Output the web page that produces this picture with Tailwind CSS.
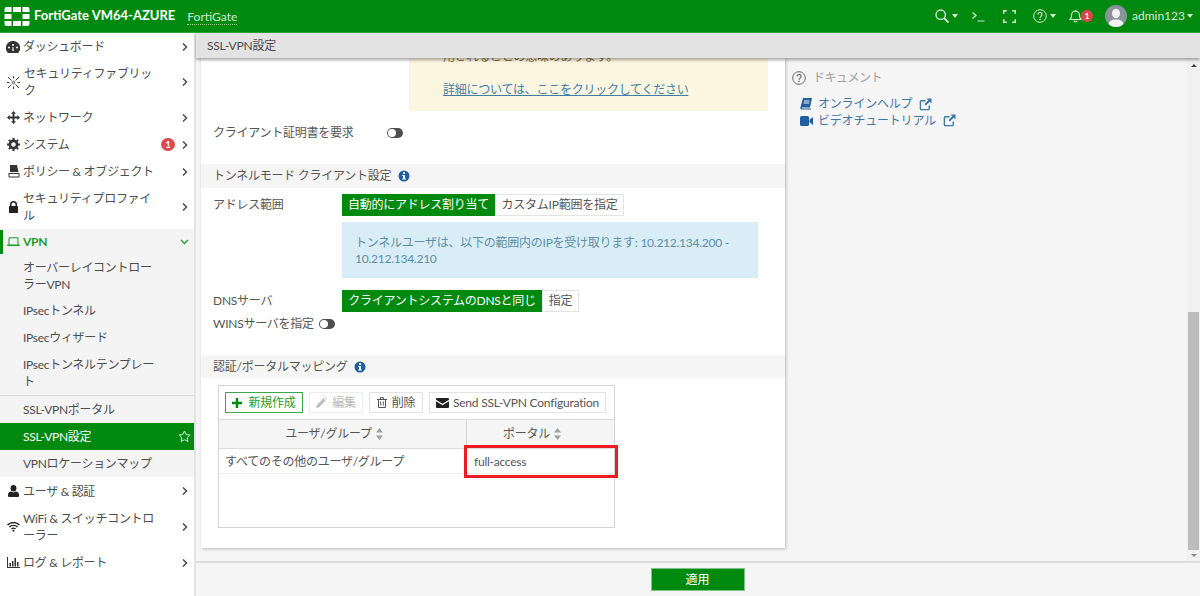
<!DOCTYPE html>
<html lang="ja">
<head>
<meta charset="utf-8">
<script src="https://cdn.jsdelivr.net/npm/@tailwindcss/browser@4"></script>
<title>SSL-VPN設定</title>
</head>
<body class="m-0">
<svg class="hidden">
  <defs>
    <symbol id="chev" viewBox="0 0 8 12"><path d="M2 2.500l3.500 3.500L2 9.500" fill="none" stroke="currentColor" stroke-width="1.500"/></symbol>
    <symbol id="ext" viewBox="0 0 14 14"><path d="M7 3H2.500A1 1 0 0 0 1.500 4v7.500a1 1 0 0 0 1 1H10a1 1 0 0 0 1-1V8" fill="none" stroke="currentColor" stroke-width="1.500"/><path d="M8 .5h5.500V6l-2-2-4 4L6 6.500l4-4z" fill="currentColor"/></symbol>
    <symbol id="info" viewBox="0 0 12 12"><circle cx="6" cy="6" r="5.500" fill="#1f5f9e"/><rect x="5" y="2.200" width="2" height="1.800" fill="#fff"/><path d="M4.300 5h2.700v3.400h.8v1H4.300v-1h.8V6h-.8z" fill="#fff"/></symbol>
    <symbol id="sort" viewBox="0 0 8 12"><path d="M4 0l3.500 4.500h-7zM4 12L.5 7.500h7z" fill="currentColor"/></symbol>
  </defs>
</svg>
<div class="w-[1200px] h-[596px] flex flex-col overflow-hidden bg-[#f5f5f5] text-[12px] text-[#555] font-['Lato','Noto_Sans_CJK_JP',sans-serif]">

  <header class="h-[33px] shrink-0 bg-[#00890f] text-white flex items-center border-b border-[#2ea33a]">
    <svg class="ml-[4px] w-[26px] h-[19px]" viewBox="0 0 25 19" fill="#fff">
      <path d="M0 2a2 2 0 0 1 2-2h5v5H0zM8.500 0h8v5h-8zM18 0h5a2 2 0 0 1 2 2v3h-7zM0 7h7v5H0zM18 7h7v5h-7zM0 14h7v5H2a2 2 0 0 1-2-2zM8.500 14h8v5h-8zM18 14h7v3a2 2 0 0 1-2 2h-5z"/>
    </svg>
    <span class="ml-[4px] text-[13px] font-bold whitespace-nowrap">FortiGate VM64-AZURE</span>
    <span class="ml-[12px] text-[12px] text-[#cfe9d2] border-b border-dotted border-[#9fd0a5] leading-[15px] mt-[1px]">FortiGate</span>
    <div class="ml-auto flex items-center text-[#d5ecd8]">
      <svg class="w-[14px] h-[14px]" viewBox="0 0 14 14" fill="none" stroke="currentColor" stroke-width="1.400"><circle cx="5.700" cy="5.700" r="4.700"/><path d="M9 9l4.500 4.500" stroke-width="1.800"/></svg>
      <svg class="ml-[3px] w-[6px] h-[4px]" viewBox="0 0 6 4" fill="currentColor"><path d="M0 0h6L3 4z"/></svg>
      <svg class="ml-[14px] w-[13px] h-[11px]" viewBox="0 0 13 11" fill="none" stroke="currentColor" stroke-width="1.200"><path d="M.5 1.500l3.500 3-3.500 3M5.500 10h7"/></svg>
      <svg class="ml-[18px] w-[13px] h-[13px]" viewBox="0 0 13 13" fill="none" stroke="currentColor" stroke-width="1.500"><path d="M.8 3.800V.8h3M9.200.8h3v3M12.200 9.200v3h-3M3.800 12.200h-3v-3"/></svg>
      <svg class="ml-[17px] w-[14px] h-[14px]" viewBox="0 0 14 14" fill="none" stroke="currentColor" stroke-width="1"><circle cx="7" cy="7" r="6.300"/><path d="M5 5.500a2 2 0 1 1 3 1.700c-.7.400-1 .8-1 1.500" stroke-width="1.200"/><rect x="6.400" y="9.700" width="1.300" height="1.300" fill="currentColor" stroke="none"/></svg>
      <svg class="ml-[3px] w-[6px] h-[4px]" viewBox="0 0 6 4" fill="currentColor"><path d="M0 0h6L3 4z"/></svg>
      <svg class="ml-[13px] w-[13px] h-[14px]" viewBox="0 0 13 14" fill="none" stroke="currentColor" stroke-width="1.100"><path d="M1 10.500c1.300-1.200 1.600-2.500 1.600-4.500a3.900 3.900 0 0 1 7.800 0c0 2 .3 3.300 1.600 4.500zM5 11.500a1.500 1.500 0 0 0 3 0M6.500 1v1"/></svg>
      <span class="-ml-[1px] w-[12px] h-[12px] rounded-full bg-[#e0434e] text-white text-[8px] font-bold leading-[12px] text-center">1</span>
      <span class="ml-[12px] w-[22px] h-[22px] rounded-full bg-[#8a929b] overflow-hidden flex">
        <svg class="w-[22px] h-[22px]" viewBox="0 0 22 22" fill="#f2f2f2"><ellipse cx="11" cy="8.500" rx="4" ry="4.800"/><path d="M3.500 19.500c.5-3.500 3-4.500 5-5h5c2 .5 4.500 1.500 5 5l-3 2.500h-9z"/></svg>
      </span>
      <span class="ml-[5px] text-[12px] leading-none">admin123</span>
      <svg class="ml-[2px] mr-[7px] w-[6px] h-[4px]" viewBox="0 0 6 4" fill="currentColor"><path d="M0 0h6L3 4z"/></svg>
    </div>
  </header>

  <div class="flex-1 flex min-h-0">
    <nav class="w-[196px] shrink-0 bg-white border-r-2 border-[#e4e4e4] flex flex-col text-[#4d4d4d] leading-[17px] tracking-[-0.3px]">
      <a class="h-[27px] flex items-center">
        <svg class="ml-[6px] w-[14px] h-[12px] text-[#333]" viewBox="0 0 14 12" fill="currentColor"><path d="M7 0a7 7 0 0 0-6 10.800l1 1.200h10l1-1.200A7 7 0 0 0 7 0zM3 7.500a1 1 0 1 1 0-2 1 1 0 0 1 0 2zm3-3.500a1 1 0 1 1 2 0 1 1 0 0 1-2 0zm1.700 6H6.300l.2-4 1-.1zM11 7.500a1 1 0 1 1 0-2 1 1 0 0 1 0 2z"/></svg>
        <span class="ml-[3px]">ダッシュボード</span>
        <svg class="ml-auto mr-[5px] w-[8px] h-[12px]"><use href="#chev"/></svg>
      </a>
      <a class="h-[44px] flex items-center">
        <svg class="ml-[7px] w-[13px] h-[13px] text-[#444]" viewBox="0 0 13 13" fill="none" stroke="currentColor" stroke-width="1"><path d="M1 1l3.500 3.500M12 1L8.500 4.500M1 12l3.500-3.500M12 12L8.500 8.500M6.500 0v2.500M0 6.500h2.500M13 6.500h-2.500M6.500 13v-2.500"/><circle cx="6.500" cy="6.500" r="1.200"/></svg>
        <span class="ml-[4px]">セキュリティファブリッ<br>ク</span>
        <svg class="ml-auto mr-[5px] w-[8px] h-[12px]"><use href="#chev"/></svg>
      </a>
      <a class="h-[27px] flex items-center">
        <svg class="ml-[7px] w-[13px] h-[13px] text-[#333]" viewBox="0 0 13 13" fill="currentColor"><path d="M6.500 0L9 2.700H7.400V5.600h2.900V4L13 6.500 10.300 9V7.400H7.400v2.900H9L6.500 13 4 10.300h1.600V7.400H2.700V9L0 6.500 2.700 4v1.600h2.900V2.700H4z"/></svg>
        <span class="ml-[3px]">ネットワーク</span>
        <svg class="ml-auto mr-[5px] w-[8px] h-[12px]"><use href="#chev"/></svg>
      </a>
      <a class="h-[27px] flex items-center">
        <svg class="ml-[7px] w-[13px] h-[13px] text-[#333]" viewBox="0 0 13 13" fill="none"><circle cx="6.500" cy="6.500" r="3.600" stroke="currentColor" stroke-width="2.600"/><path d="M6.500 0v13M0 6.500h13M1.900 1.900l9.200 9.200M11.100 1.900l-9.200 9.200" stroke="currentColor" stroke-width="2" stroke-dasharray="2 9"/></svg>
        <span class="ml-[3px]">システム</span>
        <span class="ml-auto w-[14px] h-[13px] rounded-full bg-[#dc4a50] text-white text-[9px] font-bold leading-[13px] text-center">1</span>
        <svg class="ml-[6px] mr-[5px] w-[8px] h-[12px]"><use href="#chev"/></svg>
      </a>
      <a class="h-[27px] flex items-center">
        <svg class="ml-[8px] w-[12px] h-[13px] text-[#333]" viewBox="0 0 12 13" fill="currentColor"><path d="M2 0h7l1.500 7H2zM.5 8h11v3.500a1 1 0 0 1-1 1h-9a1 1 0 0 1-1-1zM1.500 9v2.500h9V9z"/></svg>
        <span class="ml-[3px]">ポリシー &amp; オブジェクト</span>
        <svg class="ml-auto mr-[5px] w-[8px] h-[12px]"><use href="#chev"/></svg>
      </a>
      <a class="h-[44px] flex items-center">
        <svg class="ml-[9px] w-[9px] h-[12px] text-[#222]" viewBox="0 0 9 12" fill="currentColor"><path d="M1 5V3.500a3.500 3.500 0 0 1 7 0V5h.5a.5.5 0 0 1 .5.500v6a.5.5 0 0 1-.5.500h-8a.5.5 0 0 1-.5-.500v-6A.5.5 0 0 1 .5 5zm1.500 0h4V3.500a2 2 0 0 0-4 0z"/></svg>
        <span class="ml-[5px]">セキュリティプロファイ<br>ル</span>
        <svg class="ml-auto mr-[5px] w-[8px] h-[12px]"><use href="#chev"/></svg>
      </a>
      <div class="bg-[#f4f4f4] flex flex-col">
        <a class="h-[25px] flex items-center text-[#1f9a2c] font-bold relative before:absolute before:left-0 before:top-[1px] before:bottom-0 before:w-[3px] before:bg-[#00890f]">
          <svg class="ml-[7px] w-[13px] h-[10px]" viewBox="0 0 13 10" fill="none" stroke="currentColor" stroke-width="1"><path d="M2 7.500V.8h9v6.700M.3 8.300h12.400"/><path d="M.3 8.300h12.400" stroke-width="1.500"/></svg>
          <span class="ml-[3px] text-[12px] font-bold">VPN</span>
          <svg class="ml-auto mr-[5px] w-[9px] h-[6px]" viewBox="0 0 9 6"><path d="M1 1l3.500 3.500L8 1" fill="none" stroke="currentColor" stroke-width="1.300"/></svg>
        </a>
        <a class="h-[43px] flex items-center pl-[23px]">オーバーレイコントロー<br>ラーVPN</a>
        <a class="h-[27px] flex items-center pl-[23px]">IPsecトンネル</a>
        <a class="h-[27px] flex items-center pl-[23px]">IPsecウィザード</a>
        <a class="h-[44px] flex items-center pl-[23px]">IPsecトンネルテンプレー<br>ト</a>
        <div class="h-px bg-[#dedede]"></div>
        <a class="h-[27px] flex items-center pl-[23px]">SSL-VPNポータル</a>
        <a class="h-[27px] flex items-center pl-[23px] bg-[#00890f] text-white">SSL-VPN設定
          <svg class="ml-auto mr-[3px] w-[13px] h-[13px] text-[#d5ecd8]" viewBox="0 0 13 13" fill="none" stroke="currentColor" stroke-width="1"><path d="M6.500 1l1.700 3.500 3.800.5-2.800 2.700.7 3.800-3.400-1.800-3.400 1.800.7-3.800L1 5l3.800-.5z"/></svg>
        </a>
        <a class="h-[27px] flex items-center pl-[23px]">VPNロケーションマップ</a>
      </div>
      <a class="h-[28px] flex items-center">
        <svg class="ml-[8px] w-[11px] h-[12px] text-[#222]" viewBox="0 0 11 12" fill="currentColor"><ellipse cx="5.500" cy="3.200" rx="2.900" ry="3.200"/><path d="M3 6.500l2.500 1 2.500-1c2 .3 3 1.500 3 3.500v1a1 1 0 0 1-1 1H1a1 1 0 0 1-1-1v-1c0-2 1-3.200 3-3.500z"/></svg>
        <span class="ml-[4px]">ユーザ &amp; 認証</span>
        <svg class="ml-auto mr-[5px] w-[8px] h-[12px]"><use href="#chev"/></svg>
      </a>
      <a class="h-[44px] flex items-center">
        <svg class="ml-[7px] w-[13px] h-[10px] text-[#222]" viewBox="0 0 13 10" fill="none" stroke="currentColor" stroke-width="1.400"><path d="M.5 3a8.500 8.500 0 0 1 12 0M2.500 5a5.700 5.700 0 0 1 8 0M4.500 7a3 3 0 0 1 4 0"/><circle cx="6.500" cy="8.800" r="1" fill="currentColor" stroke="none"/></svg>
        <span class="ml-[3px]">WiFi &amp; スイッチコントロ<br>ーラー</span>
        <svg class="ml-auto mr-[5px] w-[8px] h-[12px]"><use href="#chev"/></svg>
      </a>
      <a class="h-[27px] flex items-center">
        <svg class="ml-[7px] w-[13px] h-[11px] text-[#333]" viewBox="0 0 13 11" fill="currentColor"><path d="M0 0h1v10h12v1H0zM2.500 6h1.500v3.500H2.500zM5 4h1.500v5.500H5zM7.500 1h1.500v8.500H7.500zM10 5h1.500v4.500H10z"/></svg>
        <span class="ml-[3px]">ログ &amp; レポート</span>
        <svg class="ml-auto mr-[5px] w-[8px] h-[12px]"><use href="#chev"/></svg>
      </a>
    </nav>

    <div class="flex-1 flex flex-col min-w-0">
      <div class="h-[25px] shrink-0 bg-[#e3e3e3] flex items-center pl-[11px] text-[#4a4a4a] tracking-[-0.2px] shadow-[0_2px_3px_rgba(0,0,0,0.35)] relative z-10">SSL-VPN設定</div>
      <div class="flex-1 flex min-h-0">
        <main class="w-[584px] ml-[5px] h-[490px] bg-white shadow-[1px_1px_3px_rgba(0,0,0,0.25)] overflow-hidden flex flex-col tracking-[-0.25px]">
          <div class="ml-[208px] w-[359px] h-[67px] -mt-[14px] bg-[#fcf6e1] pl-[34px] text-[#8a6d3b] leading-[16px] pt-[5px] shrink-0">
            <div>用されることの意味のあります。</div>
            <a class="block mt-[17px] text-[#3e7ea6] underline leading-[16px]">詳細については、ここをクリックしてください</a>
          </div>
          <div class="h-[53px] shrink-0 flex items-start pl-[12px] pt-[13px]">
            <span class="w-[174px] leading-[17px]">クライアント証明書を要求</span>
            <span class="mt-[4px] w-[16px] h-[10px] rounded-full bg-[#4f4f4f] relative"><span class="absolute left-[1px] top-[1px] w-[8px] h-[8px] rounded-full bg-white"></span></span>
          </div>
          <div class="h-[24px] shrink-0 bg-[#f5f5f5] flex items-center pl-[12px]">
            <span>トンネルモード クライアント設定</span>
            <svg class="ml-[7px] w-[12px] h-[12px]"><use href="#info"/></svg>
          </div>
          <div class="flex pl-[12px] pt-[6px] shrink-0">
            <span class="w-[129px] pt-[2px] leading-[17px]">アドレス範囲</span>
            <div class="flex flex-col">
              <div class="flex h-[22px]">
                <span class="w-[153px] bg-[#00890f] text-white flex items-center justify-center">自動的にアドレス割り当て</span>
                <span class="w-[129px] bg-white border border-[#e3e3e3] flex items-center justify-center">カスタムIP範囲を指定</span>
              </div>
              <div class="mt-[6px] w-[416px] h-[56px] bg-[#d9edf7] text-[#5b8fa8] pl-[13px] pt-[13px] leading-[16px]">トンネルユーザは、以下の範囲内のIPを受け取ります: 10.212.134.200 -<br>10.212.134.210</div>
            </div>
          </div>
          <div class="flex pl-[12px] pt-[12px] shrink-0">
            <span class="w-[129px] pt-[2px] leading-[17px]">DNSサーバ</span>
            <div class="flex h-[22px]">
              <span class="w-[200px] bg-[#00890f] text-white flex items-center justify-center">クライアントシステムのDNSと同じ</span>
              <span class="w-[37px] bg-white border border-[#e3e3e3] flex items-center justify-center">指定</span>
            </div>
          </div>
          <div class="flex items-center pl-[12px] h-[17px] mt-[3px] shrink-0">
            <span class="leading-[17px]">WINSサーバを指定</span>
            <span class="ml-[5px] w-[16px] h-[10px] rounded-full bg-[#4f4f4f] relative"><span class="absolute left-[1px] top-[1px] w-[8px] h-[8px] rounded-full bg-white"></span></span>
          </div>
          <div class="h-[23px] mt-[23px] shrink-0 bg-[#f5f5f5] flex items-center pl-[12px]">
            <span>認証/ポータルマッピング</span>
            <svg class="ml-[7px] w-[12px] h-[12px]"><use href="#info"/></svg>
          </div>
          <div class="mt-[7px] ml-[17px] w-[397px] h-[143px] border border-[#d4d4d4] shrink-0 flex flex-col relative">
            <div class="h-[33px] flex items-start pt-[6px] pl-[6px] gap-[6px] shrink-0">
              <span class="h-[21px] w-[78px] border border-[#3da64a] text-[#1f9a2c] flex items-center justify-center gap-[6px]">
                <svg class="w-[10px] h-[10px]" viewBox="0 0 10 10" fill="#00890f"><path d="M3.800 0h2.400v3.800H10v2.400H6.200V10H3.800V6.200H0V3.800h3.800z"/></svg>新規作成</span>
              <span class="h-[21px] w-[54px] border border-[#ececec] text-[#b8b8b8] flex items-center justify-center gap-[5px]">
                <svg class="w-[11px] h-[11px]" viewBox="0 0 11 11" fill="#bdbdbd"><path d="M0 11l.8-3L7.500 1.300 9.700 3.500 3 10.200zM8.200.6l.6-.6 2.200 2.200-.6.600z"/></svg>編集</span>
              <span class="h-[21px] w-[54px] border border-[#e3e3e3] flex items-center justify-center gap-[5px]">
                <svg class="w-[10px] h-[11px]" viewBox="0 0 10 11" fill="none" stroke="#555" stroke-width="1"><path d="M0 2.500h10M3.500 2.500V.7h3v1.800M1.500 2.500v8h7v-8M3.700 4.500v4M6.300 4.500v4"/></svg>削除</span>
              <span class="h-[21px] w-[177px] border border-[#e3e3e3] flex items-center justify-center gap-[4px] tracking-[-0.2px] whitespace-nowrap">
                <svg class="w-[13px] h-[10px]" viewBox="0 0 13 10" fill="#222"><path d="M1 0h11a1 1 0 0 1 1 1v.8L6.500 5.800 0 1.800V1a1 1 0 0 1 1-1zM0 3.200l6.500 4 6.500-4V9a1 1 0 0 1-1 1H1a1 1 0 0 1-1-1z"/></svg>Send SSL-VPN Configuration</span>
            </div>
            <div class="h-[30px] flex bg-[#f5f5f5] border-y border-[#dcdcdc] shrink-0">
              <div class="w-[248px] pr-[16px] flex items-center justify-center gap-[3px] border-r border-[#d4d4d4]">ユーザ/グループ<svg class="w-[9px] h-[12px] text-[#a0a0a0]"><use href="#sort"/></svg></div>
              <div class="flex-1 pr-[16px] flex items-center justify-center gap-[3px]">ポータル<svg class="w-[9px] h-[12px] text-[#a0a0a0]"><use href="#sort"/></svg></div>
            </div>
            <div class="h-[25px] flex items-center border-b border-[#ececec] shrink-0">
              <span class="w-[249px] pl-[6px] pt-[1px]">すべてのその他のユーザ/グループ</span>
              <span class="pl-[6px] pt-[1px]">full-access</span>
            </div>
            <div class="absolute left-[245px] top-[59px] w-[154px] h-[33px] border-[3px] border-[#ed1c24]"></div>
          </div>
        </main>
        <aside class="flex-1 pl-[7px] pt-[12px]">
          <div class="flex items-center h-[16px]">
            <svg class="w-[14px] h-[14px] text-[#666]" viewBox="0 0 14 14" fill="none" stroke="currentColor" stroke-width="1"><circle cx="7" cy="7" r="6.300"/><path d="M5 5.500a2 2 0 1 1 3 1.700c-.7.400-1 .8-1 1.500" stroke-width="1.200"/><rect x="6.400" y="9.700" width="1.300" height="1.300" fill="currentColor" stroke="none"/></svg>
            <span class="ml-[7px] text-[#a0a0a0] tracking-[-0.5px]">ドキュメント</span>
          </div>
          <div class="mt-[10px] flex items-center h-[16px] pl-[8px] text-[#3f78a8]">
            <svg class="w-[12px] h-[12px] text-[#1f5f9e]" viewBox="0 0 12 12" fill="currentColor"><path d="M3 0h9l-2 9.500H2.500c-.8 0-.8 1 0 1h8.500v1H2C.5 11.500.2 10 .5 9zM4 2.500v1h5.500v-1zM3.700 4.500v1h5.500v-1z"/></svg>
            <span class="ml-[6px] tracking-[-0.2px]">オンラインヘルプ</span>
            <svg class="ml-[7px] w-[13px] h-[13px]"><use href="#ext"/></svg>
          </div>
          <div class="flex items-center h-[17px] pl-[8px] text-[#3f78a8]">
            <svg class="w-[13px] h-[10px] text-[#1f5f9e]" viewBox="0 0 13 10" fill="currentColor"><rect width="9" height="10" rx="1.500"/><path d="M9.500 3.800L13 1v8L9.500 6.200z"/></svg>
            <span class="ml-[5px] tracking-[-0.2px]">ビデオチュートリアル</span>
            <svg class="ml-[7px] w-[13px] h-[13px]"><use href="#ext"/></svg>
          </div>
        </aside>
        <div class="w-[13px] bg-[#f1f1f1] flex flex-col items-center shrink-0 h-[503px] pt-[6px]">
          <svg class="w-[6px] h-[3px] text-[#444]" viewBox="0 0 6 3" fill="currentColor"><path d="M3 0l3 3H0z"/></svg>
          <div class="mt-[245px] w-[11px] h-[238px] bg-[#bdbdbd]"></div>
          <svg class="mt-[4px] w-[6px] h-[3px] text-[#888]" viewBox="0 0 6 3" fill="currentColor"><path d="M0 0h6L3 3z"/></svg>
        </div>
      </div>
      <footer class="h-[35px] shrink-0 bg-[#f5f5f5] border-t-2 border-[#dedede] flex justify-center pt-[5px] pr-[1px]">
        <span class="w-[94px] h-[23px] bg-[#00890f] text-white border border-[#7fc487] flex items-center justify-center">適用</span>
      </footer>
    </div>
  </div>
</div>
</body>
</html>
